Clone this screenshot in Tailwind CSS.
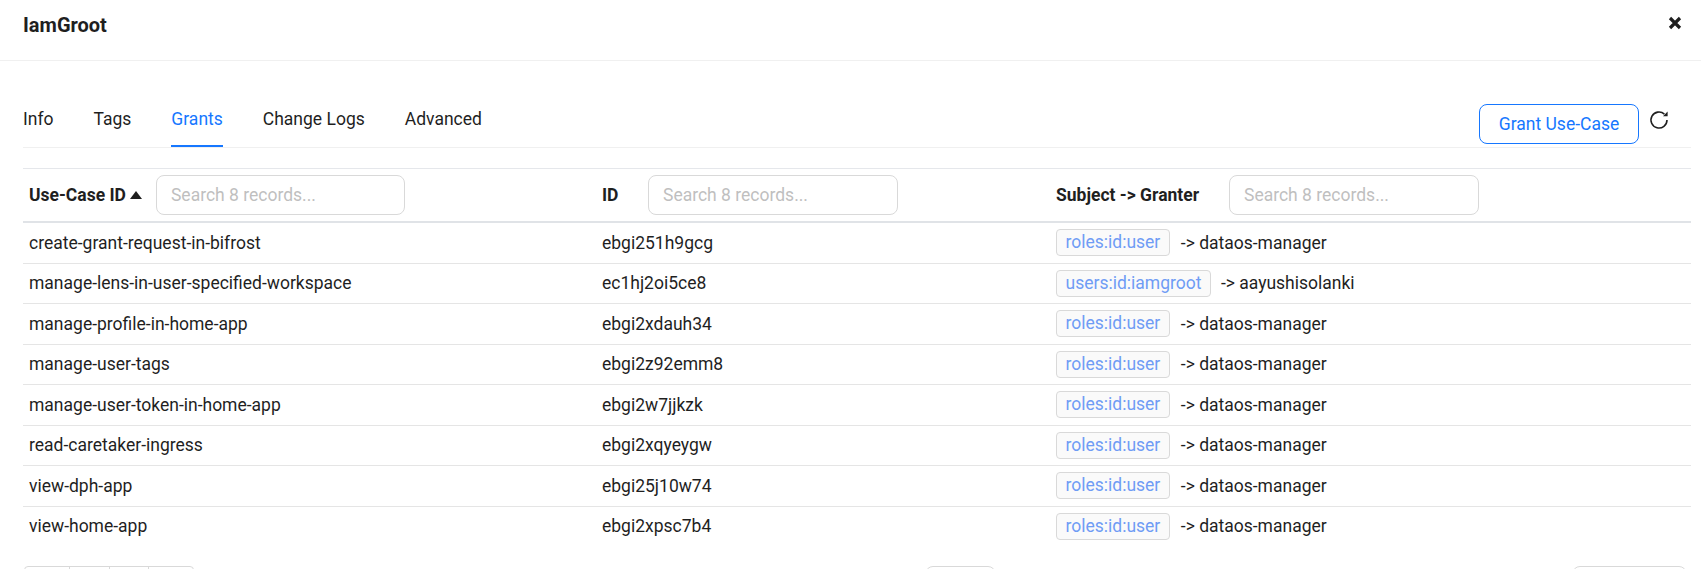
<!DOCTYPE html>
<html lang="en">
<head>
    <meta charset="UTF-8">
    <title>IamGroot - Grants</title>
    <script src="https://cdn.jsdelivr.net/npm/@tailwindcss/browser@4"></script>
</head>
<body class="bg-white font-['Roboto',sans-serif] text-[#1f1f1f] h-[569px] overflow-hidden">
    <!-- Header -->
    <div class="h-[61px] border-b border-[#f0f0f0] flex items-center justify-between pl-[23px] pr-[19px] pb-[11px]">
        <h1 class="text-[20px] font-bold leading-[26px]">IamGroot</h1>
        <svg class="w-[14px] h-[14px] mb-[4px]" viewBox="0 0 14 14" fill="none" stroke="#1f1f1f" stroke-width="3.2"><path d="M2 2l10 10M12 2L2 12"/></svg>
    </div>

    <div class="pl-[23px] pr-[10px]">
        <!-- Tabs -->
        <div class="h-[87px] border-b border-[#f0f0f0] flex justify-between">
            <div class="flex gap-10 pt-[45px] text-[17.5px] leading-[26px]">
                <div>Info</div>
                <div>Tags</div>
                <div class="h-[41px] border-b-2 border-[#1677ff] text-[#1677ff]">Grants</div>
                <div>Change Logs</div>
                <div>Advanced</div>
            </div>
            <div class="flex items-start gap-[10px] pt-[43px] pr-[22px]">
                <button class="w-[160px] h-[40px] border border-[#1677ff] rounded-[8px] text-[#1677ff] text-[17.5px]">Grant Use-Case</button>
                <svg class="w-[20px] h-[20px] mt-[6px]" viewBox="0 0 20 20" fill="none" stroke="#1f1f1f" stroke-width="1.6"><path d="M18 10a8 8 0 1 1-2.6-5.9"/><path d="M18.6 1.6v4.6h-4.6z" fill="#1f1f1f" stroke="none"/></svg>
            </div>
        </div>

        <!-- Table -->
        <div class="mt-[20px] border-t border-[#e5e7eb]">
            <div class="h-[54px] border-b-2 border-[#e0e3e7] grid grid-cols-[579px_454px_1fr] items-center text-[17.5px] font-bold">
                <div class="flex items-center pl-[6px]">
                    <span>Use-Case ID</span>
                    <svg class="w-[12px] h-[8px] ml-[4px]" viewBox="0 0 12 8" fill="#1f1f1f"><path d="M6 0l6 8H0z"/></svg>
                    <input placeholder="Search 8 records..." class="ml-[14px] w-[249px] h-[40px] border border-[#d9d9d9] rounded-[8px] px-[14px] font-normal placeholder:text-[#bfbfbf]">
                </div>
                <div class="flex items-center">
                    <span class="w-[46px]">ID</span>
                    <input placeholder="Search 8 records..." class="w-[250px] h-[40px] border border-[#d9d9d9] rounded-[8px] px-[14px] font-normal placeholder:text-[#bfbfbf]">
                </div>
                <div class="flex items-center">
                    <span class="w-[173px]">Subject -&gt; Granter</span>
                    <input placeholder="Search 8 records..." class="w-[250px] h-[40px] border border-[#d9d9d9] rounded-[8px] px-[14px] font-normal placeholder:text-[#bfbfbf]">
                </div>
            </div>

            <div class="grid grid-cols-[579px_454px_1fr] items-center h-[40.5px] border-b border-[#e5e5e5] text-[17.5px]">
                <div class="pl-[6px]">create-grant-request-in-bifrost</div><div>ebgi251h9gcg</div>
                <div class="flex items-center"><span class="h-[27px] px-[8.5px] leading-[25px] border border-[#d9d9d9] bg-[#fafafa] rounded-[4px] text-[#6f9cf5]">roles:id:user</span><span class="ml-[11px]">-&gt; dataos-manager</span></div>
            </div>
            <div class="grid grid-cols-[579px_454px_1fr] items-center h-[40.5px] border-b border-[#e5e5e5] text-[17.5px]">
                <div class="pl-[6px]">manage-lens-in-user-specified-workspace</div><div>ec1hj2oi5ce8</div>
                <div class="flex items-center"><span class="h-[27px] px-[8.5px] leading-[25px] border border-[#d9d9d9] bg-[#fafafa] rounded-[4px] text-[#6f9cf5]">users:id:iamgroot</span><span class="ml-[10px]">-&gt; aayushisolanki</span></div>
            </div>
            <div class="grid grid-cols-[579px_454px_1fr] items-center h-[40.5px] border-b border-[#e5e5e5] text-[17.5px]">
                <div class="pl-[6px]">manage-profile-in-home-app</div><div>ebgi2xdauh34</div>
                <div class="flex items-center"><span class="h-[27px] px-[8.5px] leading-[25px] border border-[#d9d9d9] bg-[#fafafa] rounded-[4px] text-[#6f9cf5]">roles:id:user</span><span class="ml-[11px]">-&gt; dataos-manager</span></div>
            </div>
            <div class="grid grid-cols-[579px_454px_1fr] items-center h-[40.5px] border-b border-[#e5e5e5] text-[17.5px]">
                <div class="pl-[6px]">manage-user-tags</div><div>ebgi2z92emm8</div>
                <div class="flex items-center"><span class="h-[27px] px-[8.5px] leading-[25px] border border-[#d9d9d9] bg-[#fafafa] rounded-[4px] text-[#6f9cf5]">roles:id:user</span><span class="ml-[11px]">-&gt; dataos-manager</span></div>
            </div>
            <div class="grid grid-cols-[579px_454px_1fr] items-center h-[40.5px] border-b border-[#e5e5e5] text-[17.5px]">
                <div class="pl-[6px]">manage-user-token-in-home-app</div><div>ebgi2w7jjkzk</div>
                <div class="flex items-center"><span class="h-[27px] px-[8.5px] leading-[25px] border border-[#d9d9d9] bg-[#fafafa] rounded-[4px] text-[#6f9cf5]">roles:id:user</span><span class="ml-[11px]">-&gt; dataos-manager</span></div>
            </div>
            <div class="grid grid-cols-[579px_454px_1fr] items-center h-[40.5px] border-b border-[#e5e5e5] text-[17.5px]">
                <div class="pl-[6px]">read-caretaker-ingress</div><div>ebgi2xqyeygw</div>
                <div class="flex items-center"><span class="h-[27px] px-[8.5px] leading-[25px] border border-[#d9d9d9] bg-[#fafafa] rounded-[4px] text-[#6f9cf5]">roles:id:user</span><span class="ml-[11px]">-&gt; dataos-manager</span></div>
            </div>
            <div class="grid grid-cols-[579px_454px_1fr] items-center h-[40.5px] border-b border-[#e5e5e5] text-[17.5px]">
                <div class="pl-[6px]">view-dph-app</div><div>ebgi25j10w74</div>
                <div class="flex items-center"><span class="h-[27px] px-[8.5px] leading-[25px] border border-[#d9d9d9] bg-[#fafafa] rounded-[4px] text-[#6f9cf5]">roles:id:user</span><span class="ml-[11px]">-&gt; dataos-manager</span></div>
            </div>
            <div class="grid grid-cols-[579px_454px_1fr] items-center h-[40px] text-[17.5px]">
                <div class="pl-[6px]">view-home-app</div><div>ebgi2xpsc7b4</div>
                <div class="flex items-center"><span class="h-[27px] px-[8.5px] leading-[25px] border border-[#d9d9d9] bg-[#fafafa] rounded-[4px] text-[#6f9cf5]">roles:id:user</span><span class="ml-[11px]">-&gt; dataos-manager</span></div>
            </div>
        </div>

        <!-- Pagination, cut off by the window -->
        <div class="mt-[19.5px] flex h-[3px] overflow-hidden">
            <div class="flex w-[170px] h-[40px] border border-[#d9d9d9] rounded-[4px] ml-[1px] shrink-0">
                <div class="w-[45px] border-r border-[#d9d9d9]"></div>
                <div class="w-[40px] border-r border-[#d9d9d9]"></div>
                <div class="w-[39px] border-r border-[#d9d9d9]"></div>
            </div>
            <div class="w-[71px] h-[40px] border border-[#d9d9d9] rounded-[8px] ml-[731px] shrink-0"></div>
            <div class="w-[115px] h-[40px] border border-[#d9d9d9] rounded-[8px] ml-[576px] shrink-0"></div>
        </div>
    </div>
</body>
</html>
